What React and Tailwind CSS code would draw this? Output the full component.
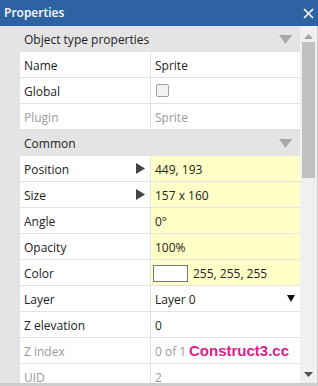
import React from "react";

const font = { fontFamily: '"Open Sans", "Noto Sans", sans-serif' };

function Section({ title }) {
  return (
    <div className="flex h-[26px] shrink-0 items-center bg-[#e4e4e4] pl-[24px] pr-[8px] text-[12px] text-[#222]">
      <span className="flex-1 pt-[1px]">{title}</span>
      <svg width="13" height="9" viewBox="0 0 13 9">
        <polygon points="0,0 13,0 6.5,9" fill="#a8a8a8" />
      </svg>
    </div>
  );
}

function Row({ name, dim, arrow, yellow, children }) {
  return (
    <div className="flex h-[26px] shrink-0">
      <div className="w-[20px] shrink-0 bg-[#e4e4e4]" />
      <div
        className={`flex w-[131px] shrink-0 items-center border-r border-b border-[#e3e3e3] bg-white pl-[4px] pr-[5px] pt-[2px] text-[12px] ${
          dim ? "text-[#9a9a9a]" : "text-[#222]"
        }`}
      >
        <span className="flex-1">{name}</span>
        {arrow && (
          <svg width="9" height="11" viewBox="0 0 9 11" className="-mt-[2px]">
            <polygon points="0,0 9,5.5 0,11" fill="#444" />
          </svg>
        )}
      </div>
      <div
        className={`flex flex-1 items-center border-b border-[#e3e3e3] pl-[4px] pt-[2px] text-[12px] ${
          yellow ? "bg-[#ffffc8]" : "bg-white"
        } ${dim ? "text-[#9a9a9a]" : "text-[#222]"}`}
      >
        {children}
      </div>
    </div>
  );
}

export default function App() {
  return (
    <div className="flex h-[386px] w-[318px] flex-col overflow-hidden bg-white" style={font}>
      <div className="flex h-[26px] shrink-0 items-center bg-[#2e63a3] pl-[4px] pr-[4px] text-white">
        <span className="flex-1 text-[12px] font-semibold">Properties</span>
        <svg width="11" height="11" viewBox="0 0 11 11" className="mr-[0px]">
          <path d="M1 1 L10 10 M10 1 L1 10" stroke="white" strokeWidth="1.6" />
        </svg>
      </div>
      <div className="relative flex min-h-0 flex-1 border-r border-b-[3px] border-[#cdcdcd]">
        <div className="flex w-[300px] flex-col overflow-hidden">
          <Section title="Object type properties" />
          <Row name="Name">Sprite</Row>
          <Row name="Global">
            <div className="-mt-[2px] ml-[1px] h-[13px] w-[13px] rounded-[2px] border border-[#a0a0a0] bg-[#f2f2f2]" />
          </Row>
          <Row name="Plugin" dim>
            Sprite
          </Row>
          <Section title="Common" />
          <Row name="Position" arrow yellow>
            449, 193
          </Row>
          <Row name="Size" arrow yellow>
            157 x 160
          </Row>
          <Row name="Angle" yellow>
            0°
          </Row>
          <Row name="Opacity" yellow>
            100%
          </Row>
          <Row name="Color" yellow>
            <div className="-mt-[1px] mr-[5px] -ml-[2px] h-[17px] w-[35px] border border-[#777] bg-white" />
            <span>255, 255, 255</span>
          </Row>
          <Row name="Layer">
            <span className="flex-1">Layer 0</span>
            <svg width="8" height="7" viewBox="0 0 8 7" className="mr-[5px] -mt-[2px]">
              <polygon points="0,0 8,0 4,7" fill="#111" />
            </svg>
          </Row>
          <Row name="Z elevation">0</Row>
          <Row name="Z index" dim>
            0 of 1
          </Row>
          <Row name="UID" dim>
            2
          </Row>
        </div>
        <div className="flex w-[17px] flex-col items-center bg-[#f0f0f0]">
          <svg width="9" height="5" viewBox="0 0 9 5" className="mt-[8px]">
            <polygon points="0,5 9,5 4.5,0" fill="#a3a3a3" />
          </svg>
          <div className="mt-[3px] h-[136px] w-[13px] bg-[#c1c1c1]" />
          <div className="flex-1" />
          <svg width="9" height="5" viewBox="0 0 9 5" className="mb-[6px]">
            <polygon points="0,0 9,0 4.5,5" fill="#505050" />
          </svg>
        </div>
        <div
          className="absolute left-[189px] top-[314px] text-[15px] font-bold text-[#e0208a]"
          style={{ fontFamily: '"Liberation Sans", Arial, sans-serif' }}
        >
          Construct3.cc
        </div>
      </div>
    </div>
  );
}
